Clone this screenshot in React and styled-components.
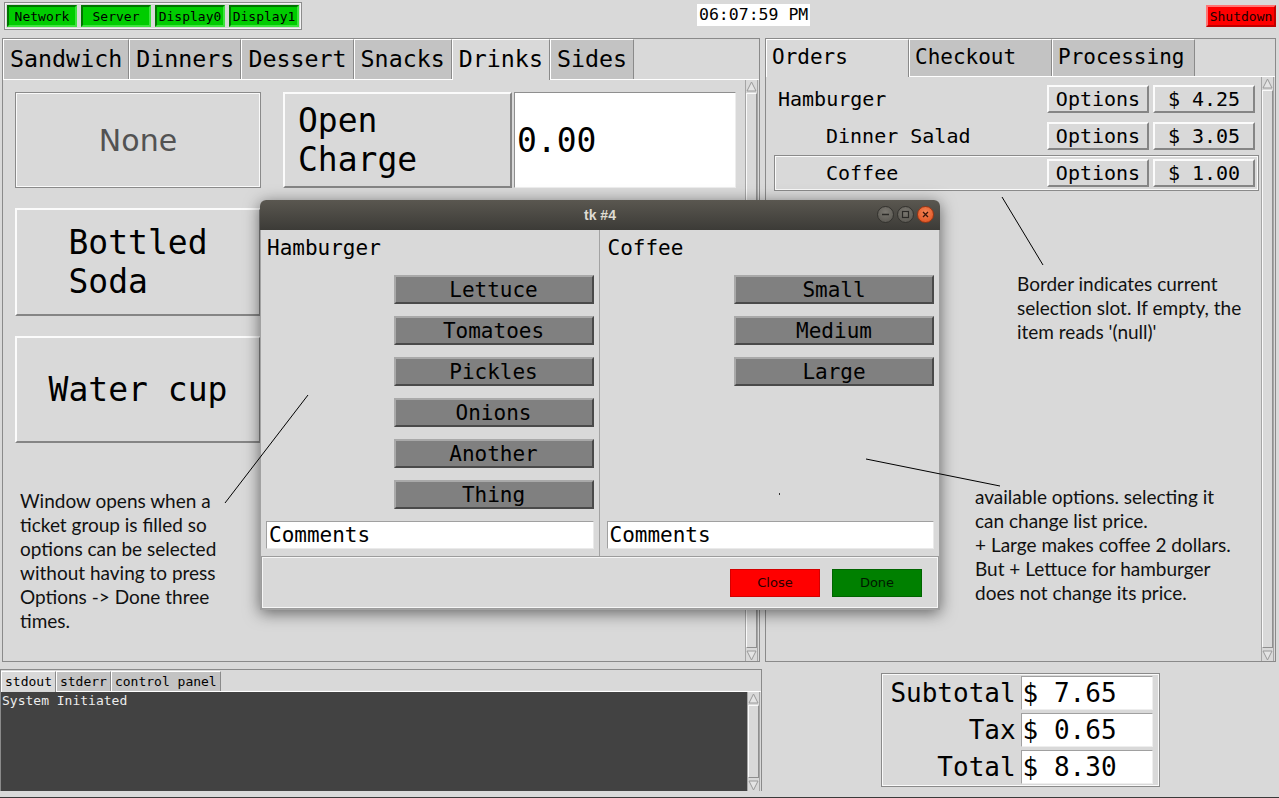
import React from "react";
import styled, { createGlobalStyle } from "styled-components";

const GlobalStyle = createGlobalStyle`
  html, body {
    margin: 0;
    padding: 0;
    background: #d9d9d9;
  }
  body {
    font-family: "DejaVu Sans Mono", monospace;
    overflow: hidden;
  }
  * { box-sizing: border-box; }
`;

const MONO = `"DejaVu Sans Mono", monospace`;

const orders = [
  { name: "Hamburger", indent: 0, price: "$ 4.25" },
  { name: "Dinner Salad", indent: 48, price: "$ 3.05" },
  { name: "Coffee", indent: 48, price: "$ 1.00", current: true },
];

const groups = [
  { title: "Hamburger", options: ["Lettuce", "Tomatoes", "Pickles", "Onions", "Another", "Thing"] },
  { title: "Coffee", options: ["Small", "Medium", "Large"] },
];

function App() {
  return (
    <Screen>
      <GlobalStyle />
      <TopBar>
        <StatusGroup>
          {["Network", "Server", "Display0", "Display1"].map((s) => (
            <StatusLight key={s}>{s}</StatusLight>
          ))}
        </StatusGroup>
        <Clock>06:07:59 PM</Clock>
        <Shutdown>Shutdown</Shutdown>
      </TopBar>

      <MainRow>
        <Notebook $width={758}>
          <TabStrip>
            {["Sandwich", "Dinners", "Dessert", "Snacks", "Drinks", "Sides"].map((t) => (
              <MenuTab key={t} $active={t === "Drinks"}>{t}</MenuTab>
            ))}
          </TabStrip>
          <PanelBody>
            <ButtonGrid>
              <DisabledButton>None</DisabledButton>
              <ChargeCell>
                <ItemButton $align="left">{"Open\nCharge"}</ItemButton>
                <ChargeEntry>0.00</ChargeEntry>
              </ChargeCell>
              <ItemButton>{"Bottled\nSoda"}</ItemButton>
              <span />
              <ItemButton>Water cup</ItemButton>
            </ButtonGrid>
            <ScrollBar />
          </PanelBody>
        </Notebook>

        <Notebook $width={511}>
          <TabStrip>
            {["Orders", "Checkout", "Processing"].map((t) => (
              <OrderTab key={t} $active={t === "Orders"}>{t}</OrderTab>
            ))}
          </TabStrip>
          <PanelBody>
            <OrderList>
              {orders.map((o) => (
                <OrderRow key={o.name} $current={o.current}>
                  <OrderName style={{ paddingLeft: o.indent }}>{o.name}</OrderName>
                  <RowButton>Options</RowButton>
                  <RowButton>{o.price}</RowButton>
                </OrderRow>
              ))}
            </OrderList>
            <ScrollBar />
          </PanelBody>
        </Notebook>
      </MainRow>

      <BottomRow>
        <Console>
          <ConsoleTabs>
            <ConsoleTab $active>stdout</ConsoleTab>
            <ConsoleTab>stderr</ConsoleTab>
            <ConsoleTab>control panel</ConsoleTab>
          </ConsoleTabs>
          <ConsoleBody>
            <ConsoleText>System Initiated</ConsoleText>
            <ScrollBar />
          </ConsoleBody>
        </Console>
        <TotalsArea>
          <Totals>
            <TotalLabel>Subtotal</TotalLabel>
            <TotalValue>$ 7.65</TotalValue>
            <TotalLabel>Tax</TotalLabel>
            <TotalValue>$ 0.65</TotalValue>
            <TotalLabel>Total</TotalLabel>
            <TotalValue>$ 8.30</TotalValue>
          </Totals>
        </TotalsArea>
      </BottomRow>

      <Dialog>
        <TitleBar>
          tk #4
          <WindowControls>
            <WinButton>
              <svg width="9" height="9" viewBox="0 0 9 9">
                <line x1="1" y1="4.5" x2="8" y2="4.5" stroke="#2b2a27" strokeWidth="1.5" />
              </svg>
            </WinButton>
            <WinButton>
              <svg width="9" height="9" viewBox="0 0 9 9">
                <rect x="1.5" y="1.5" width="6" height="6" fill="none" stroke="#2b2a27" strokeWidth="1.2" />
              </svg>
            </WinButton>
            <WinButton $close>
              <svg width="9" height="9" viewBox="0 0 9 9">
                <path d="M2 2 L7 7 M7 2 L2 7" stroke="#3a160a" strokeWidth="1.3" />
              </svg>
            </WinButton>
          </WindowControls>
        </TitleBar>
        <DialogBody>
          <GroupColumns>
            {groups.map((g, i) => (
              <GroupColumn key={g.title} $first={i === 0}>
                <GroupTitle>{g.title}</GroupTitle>
                <OptionList>
                  {g.options.map((o) => (
                    <OptionButton key={o}>{o}</OptionButton>
                  ))}
                </OptionList>
                <CommentEntry>Comments</CommentEntry>
              </GroupColumn>
            ))}
          </GroupColumns>
          <DialogFooter>
            <FooterButton $bg="#ff0000" $edge="#d40000" $fg="#2a0000">Close</FooterButton>
            <FooterButton $bg="#008000" $edge="#006400" $fg="#001800">Done</FooterButton>
          </DialogFooter>
        </DialogBody>
      </Dialog>

      <Overlay width="1279" height="798">
        <line x1="1002" y1="197" x2="1043" y2="265" stroke="#000" strokeWidth="1" />
        <line x1="866" y1="459" x2="1000" y2="486" stroke="#000" strokeWidth="1" />
        <line x1="308" y1="395" x2="225" y2="503" stroke="#000" strokeWidth="1" />
        <rect x="779" y="493" width="1" height="2" fill="#333" />
      </Overlay>

      <Note $x={1017} $y={272}>
        {"Border indicates current\nselection slot. If empty, the\nitem reads '(null)'"}
      </Note>
      <Note $x={975} $y={485}>
        {"available options. selecting it\ncan change list price.\n+ Large makes coffee 2 dollars.\nBut + Lettuce for hamburger\ndoes not change its price."}
      </Note>
      <Note $x={20} $y={489}>
        {"Window opens when a\nticket group is filled so\noptions can be selected\nwithout having to press\nOptions -> Done three\ntimes."}
      </Note>
    </Screen>
  );
}

function ScrollBar() {
  return (
    <Scroll>
      <ScrollArrow>
        <svg width="11" height="11" viewBox="0 0 11 11">
          <polygon points="5.5,1 10,10 1,10" fill="#e4e4e4" stroke="#9a9a9a" strokeWidth="1" />
        </svg>
      </ScrollArrow>
      <ScrollThumb />
      <ScrollArrow>
        <svg width="11" height="11" viewBox="0 0 11 11">
          <polygon points="1,1 10,1 5.5,10" fill="#e4e4e4" stroke="#9a9a9a" strokeWidth="1" />
        </svg>
      </ScrollArrow>
    </Scroll>
  );
}

export default App;

const Screen = styled.div`
  position: relative;
  width: 1279px;
  height: 798px;
  display: flex;
  flex-direction: column;
  background: #d9d9d9;
  overflow: hidden;
  font-family: ${MONO};
  color: #000;
  box-shadow: inset 0 -1px 0 #3a3a3a;
`;

const TopBar = styled.div`
  height: 38px;
  display: flex;
  align-items: flex-start;
  padding-top: 2px;
`;

const StatusGroup = styled.div`
  margin-left: 4px;
  display: flex;
  gap: 4px;
  padding: 2px;
  border: 1px solid #8c8c8c;
  box-shadow: inset 0 0 0 1px #f4f4f4;
`;

const StatusLight = styled.div`
  width: 70px;
  height: 22px;
  display: flex;
  align-items: center;
  justify-content: center;
  background: #00cc00;
  border: 2px solid;
  border-color: #007400 #3ee23e #3ee23e #007400;
  font-size: 13px;
`;

const Clock = styled.div`
  margin-left: 395px;
  margin-top: 2px;
  width: 113px;
  height: 22px;
  background: #fff;
  font-size: 16.5px;
  line-height: 22px;
  padding-left: 2px;
  white-space: nowrap;
`;

const Shutdown = styled.div`
  margin-left: auto;
  margin-right: 3px;
  margin-top: 3px;
  width: 70px;
  height: 22px;
  display: flex;
  align-items: center;
  justify-content: center;
  background: #ff0000;
  border: 2px solid;
  border-color: #ff7474 #c20000 #c20000 #ff7474;
  font-size: 13px;
  color: #1a0000;
`;

const MainRow = styled.div`
  height: 624px;
  display: flex;
  gap: 5px;
  padding-left: 2px;
`;

const Notebook = styled.div`
  width: ${(p) => p.$width}px;
  display: flex;
  flex-direction: column;
  border: 1px solid #8a8a8a;
`;

const TabStrip = styled.div`
  display: flex;
  border-bottom: 1px solid #fff;
`;

const TabBase = styled.div`
  position: relative;
  border-top: 1px solid #fff;
  border-left: 1px solid #fff;
  border-right: 1px solid #8a8a8a;
  background: ${(p) => (p.$active ? "#d9d9d9" : "#c3c3c3")};
  margin-bottom: ${(p) => (p.$active ? "-1px" : "0")};
  white-space: nowrap;
`;

const MenuTab = styled(TabBase)`
  height: ${(p) => (p.$active ? 41 : 40)}px;
  padding: 0 6px;
  font-size: 23.3px;
  line-height: 37px;
`;

const OrderTab = styled(TabBase)`
  width: 143px;
  height: ${(p) => (p.$active ? 38 : 37)}px;
  padding-left: 5px;
  font-size: 21px;
  line-height: 35px;
`;

const PanelBody = styled.div`
  flex: 1;
  display: flex;
  justify-content: space-between;
  min-height: 0;
`;

const ButtonGrid = styled.div`
  margin: 12px 0 0 12px;
  display: grid;
  grid-template-columns: 246px 453px;
  grid-template-rows: 96px 108px 107px;
  column-gap: 22px;
  row-gap: 20px;
  align-content: start;
`;

const ItemButton = styled.div`
  display: flex;
  align-items: center;
  justify-content: ${(p) => (p.$align === "left" ? "flex-start" : "center")};
  padding-left: ${(p) => (p.$align === "left" ? "13px" : "0")};
  border: 2px solid;
  border-color: #fbfbfb #858585 #858585 #fbfbfb;
  font-size: 33px;
  line-height: 39px;
  white-space: pre;
`;

const DisabledButton = styled.div`
  display: flex;
  align-items: center;
  justify-content: center;
  border: 1px solid #8a8a8a;
  box-shadow: inset 0 0 0 1px #fafafa;
  font-family: "DejaVu Sans", sans-serif;
  font-size: 30px;
  color: #525252;
`;

const ChargeCell = styled.div`
  display: flex;
  gap: 2px;
  & > ${ItemButton} {
    width: 229px;
  }
`;

const ChargeEntry = styled.div`
  flex: 1;
  display: flex;
  align-items: center;
  background: #fff;
  border: 1px solid;
  border-color: #8f8f8f #ededed #ededed #8f8f8f;
  padding-left: 2px;
  font-size: 33px;
`;

const Scroll = styled.div`
  width: 13px;
  margin: 0 1px 0 0;
  display: flex;
  flex-direction: column;
  border-left: 1px solid #a5a5a5;
  border-right: 1px solid #a5a5a5;
  background: #d9d9d9;
`;

const ScrollArrow = styled.div`
  height: 12px;
  display: flex;
  align-items: center;
  justify-content: center;
`;

const ScrollThumb = styled.div`
  flex: 1;
  margin: 1px 0;
  border: 1px solid;
  border-color: #fafafa #8f8f8f #8f8f8f #fafafa;
`;

const OrderList = styled.div`
  flex: 1;
  display: flex;
  flex-direction: column;
  gap: 1px;
  padding: 4px 2px 0 8px;
`;

const OrderRow = styled.div`
  height: 36px;
  display: flex;
  align-items: center;
  gap: 4px;
  padding: 0 3px;
  border: 1px solid ${(p) => (p.$current ? "#8a8a8a" : "transparent")};
  box-shadow: ${(p) => (p.$current ? "inset 0 0 0 1px #fafafa" : "none")};
`;

const OrderName = styled.div`
  flex: 1;
  font-size: 20px;
  white-space: pre;
`;

const RowButton = styled.div`
  width: 102px;
  height: 28px;
  display: flex;
  align-items: center;
  justify-content: center;
  border: 2px solid;
  border-color: #fbfbfb #858585 #858585 #fbfbfb;
  font-size: 20px;
  white-space: pre;
`;

const BottomRow = styled.div`
  flex: 1;
  display: flex;
  padding-top: 7px;
`;

const Console = styled.div`
  width: 762px;
  height: 122px;
  display: flex;
  flex-direction: column;
  border: 1px solid #8a8a8a;
  border-bottom: none;
`;

const ConsoleTabs = styled.div`
  display: flex;
  padding-top: 1px;
  border-bottom: 1px solid #fff;
`;

const ConsoleTab = styled.div`
  padding: 0 3px;
  font-size: 13px;
  line-height: 19px;
  background: ${(p) => (p.$active ? "#d9d9d9" : "#c3c3c3")};
  border-top: 1px solid #fff;
  border-left: 1px solid #fff;
  border-right: 1px solid #8a8a8a;
  margin-bottom: ${(p) => (p.$active ? "-1px" : "0")};
  height: ${(p) => (p.$active ? 21 : 20)}px;
`;

const ConsoleBody = styled.div`
  flex: 1;
  display: flex;
`;

const ConsoleText = styled.div`
  flex: 1;
  background: #424242;
  color: #ececec;
  font-size: 13px;
  line-height: 16px;
  padding: 1px 1px;
`;

const TotalsArea = styled.div`
  flex: 1;
  display: flex;
  align-items: center;
  justify-content: center;
  padding-bottom: 7px;
`;

const Totals = styled.div`
  display: grid;
  grid-template-columns: auto 132px;
  column-gap: 3px;
  row-gap: 3px;
  padding: 2px 6px 2px 8px;
  border: 1px solid #8a8a8a;
  box-shadow: inset 0 0 0 1px #fafafa;
`;

const TotalLabel = styled.div`
  text-align: right;
  padding-right: 2px;
  font-size: 26px;
  line-height: 34px;
`;

const TotalValue = styled.div`
  height: 34px;
  background: #fff;
  border: 1px solid;
  border-color: #a0a0a0 #eeeeee #eeeeee #a0a0a0;
  padding-left: 1px;
  font-size: 26px;
  line-height: 32px;
  white-space: pre;
`;

const Dialog = styled.div`
  position: absolute;
  left: 260px;
  top: 200px;
  width: 680px;
  height: 410px;
  display: flex;
  flex-direction: column;
  border-radius: 6px 6px 0 0;
  background: #d9d9d9;
  box-shadow: 0 3px 16px rgba(0, 0, 0, 0.55);
  z-index: 3;
`;

const TitleBar = styled.div`
  position: relative;
  height: 30px;
  flex-shrink: 0;
  display: flex;
  align-items: center;
  justify-content: center;
  border-radius: 6px 6px 0 0;
  background: linear-gradient(#5a5750, #3c3b37);
  color: #dfdbd2;
  font-family: "Liberation Sans", sans-serif;
  font-weight: bold;
  font-size: 14px;
`;

const WindowControls = styled.div`
  position: absolute;
  right: 6px;
  top: 6px;
  display: flex;
  gap: 3px;
`;

const WinButton = styled.div`
  width: 17px;
  height: 17px;
  border-radius: 50%;
  display: flex;
  align-items: center;
  justify-content: center;
  background: ${(p) =>
    p.$close
      ? "radial-gradient(circle at 50% 35%, #f48455, #df4f1d)"
      : "radial-gradient(circle at 50% 35%, #7a7770, #55534d)"};
  border: 1px solid ${(p) => (p.$close ? "#9e3512" : "#33322e")};
`;

const DialogBody = styled.div`
  flex: 1;
  display: flex;
  flex-direction: column;
  border: 1px solid #a2a2a2;
  border-top: none;
`;

const GroupColumns = styled.div`
  flex: 1;
  display: flex;
`;

const GroupColumn = styled.div`
  flex: 1;
  display: flex;
  flex-direction: column;
  padding: 6px 5px 7px ${(p) => (p.$first ? 5 : 7)}px;
  border-right: ${(p) => (p.$first ? "1px solid #a3a3a3" : "none")};
`;

const GroupTitle = styled.div`
  font-size: 21px;
  line-height: 24px;
  padding-left: 1px;
`;

const OptionList = styled.div`
  margin-top: 15px;
  display: flex;
  flex-direction: column;
  align-items: flex-end;
  gap: 12px;
`;

const OptionButton = styled.div`
  width: 200px;
  height: 29px;
  display: flex;
  align-items: center;
  justify-content: center;
  background: #808080;
  border: 2px solid;
  border-color: #a9a9a9 #4a4a4a #4a4a4a #a9a9a9;
  font-size: 21px;
  line-height: 24px;
`;

const CommentEntry = styled.div`
  margin-top: auto;
  height: 28px;
  background: #fff;
  border: 1px solid;
  border-color: #a0a0a0 #eaeaea #eaeaea #a0a0a0;
  padding-left: 2px;
  font-size: 21px;
  line-height: 26px;
`;

const DialogFooter = styled.div`
  height: 53px;
  display: flex;
  align-items: center;
  justify-content: flex-end;
  gap: 12px;
  padding-right: 16px;
  border: 1px solid #9c9c9c;
  box-shadow: inset 0 0 0 1px #f6f6f6;
`;

const FooterButton = styled.div`
  width: 90px;
  height: 28px;
  display: flex;
  align-items: center;
  justify-content: center;
  background: ${(p) => p.$bg};
  border: 1px solid ${(p) => p.$edge};
  color: ${(p) => p.$fg};
  font-family: "DejaVu Sans", sans-serif;
  font-size: 13px;
`;

const Overlay = styled.svg`
  position: absolute;
  left: 0;
  top: 0;
  pointer-events: none;
  z-index: 5;
`;

const Note = styled.div`
  position: absolute;
  left: ${(p) => p.$x}px;
  top: ${(p) => p.$y}px;
  font-family: Lato, "Open Sans", sans-serif;
  font-size: 19px;
  line-height: 24px;
  color: #111;
  white-space: pre;
  z-index: 5;
`;
